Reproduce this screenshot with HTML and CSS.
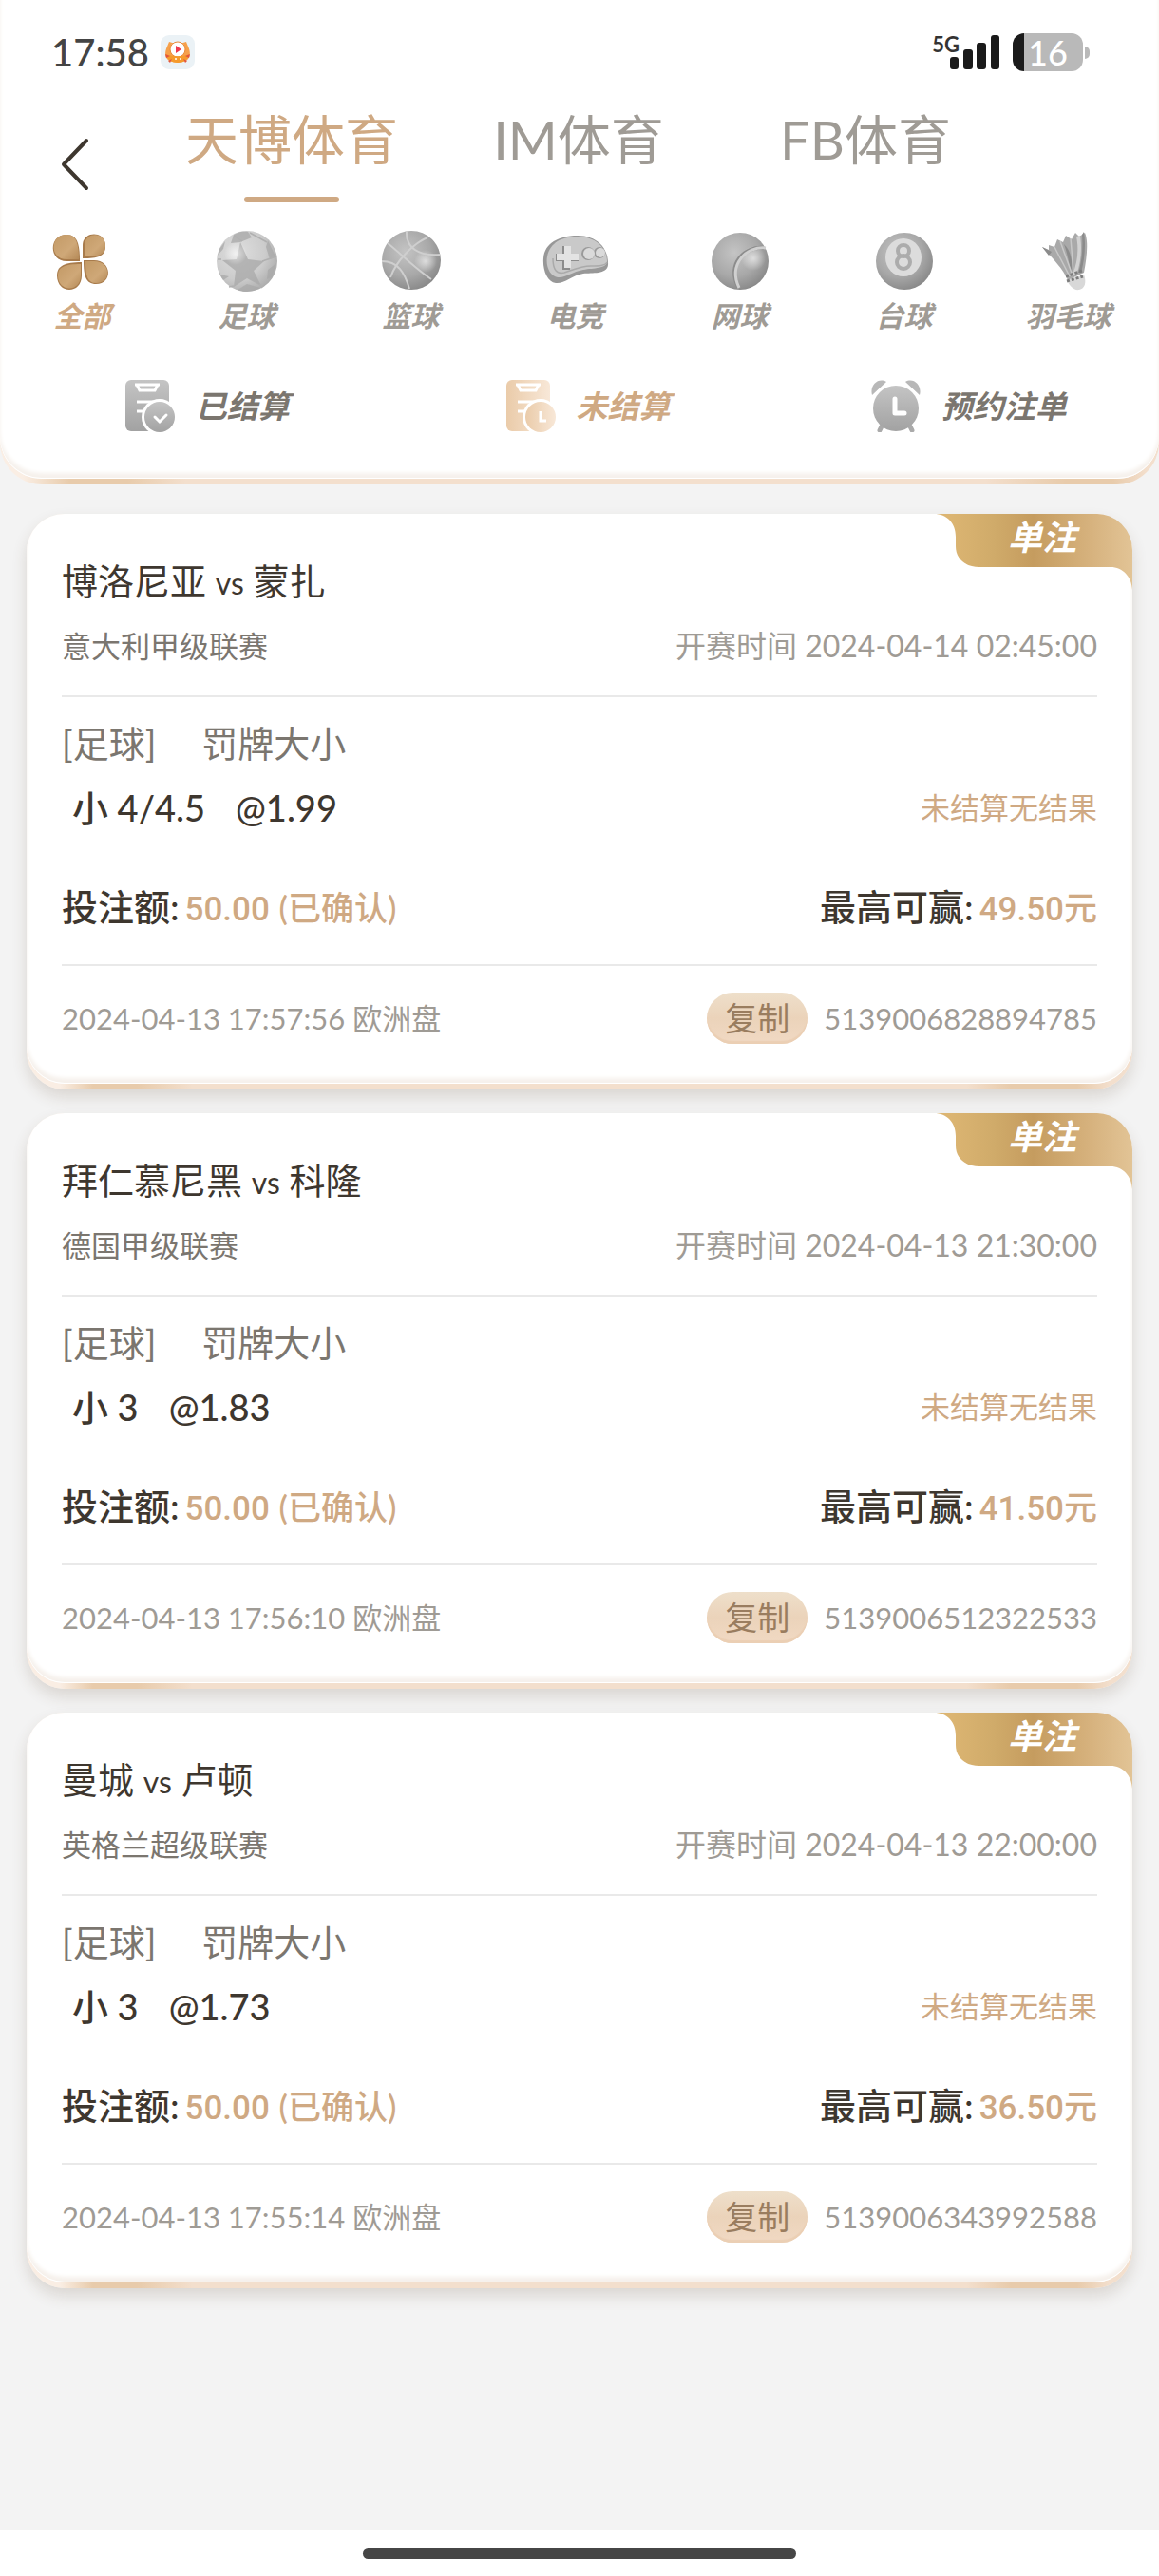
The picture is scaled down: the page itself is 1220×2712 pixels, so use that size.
FILE: index.html
```html
<!DOCTYPE html>
<html lang="zh-CN">
<head>
    <meta charset="UTF-8">
    <meta name="viewport" content="width=device-width, initial-scale=1.0">
    <title>投注记录</title>
    <link rel="stylesheet" href="styles.css">
</head>
<body>

<!-- Shared gradients and the badge shape -->
<svg class="defs" width="0" height="0" aria-hidden="true">
    <defs>
        <linearGradient id="gold" x1="0" y1="0" x2="1" y2="1">
            <stop offset="0" stop-color="#c39a66"/>
            <stop offset="0.6" stop-color="#cfa878"/>
            <stop offset="1" stop-color="#b58a58"/>
        </linearGradient>
        <radialGradient id="ball" cx="0.4" cy="0.35" r="0.7">
            <stop offset="0" stop-color="#c4c4c4"/>
            <stop offset="0.6" stop-color="#a8a8a8"/>
            <stop offset="1" stop-color="#868686"/>
        </radialGradient>
        <radialGradient id="soccer" cx="0.35" cy="0.35" r="0.75">
            <stop offset="0" stop-color="#dedede"/>
            <stop offset="0.6" stop-color="#cccccc"/>
            <stop offset="1" stop-color="#a8a8a8"/>
        </radialGradient>
        <radialGradient id="shine">
            <stop offset="0" stop-color="#fff" stop-opacity="0.6"/>
            <stop offset="1" stop-color="#fff" stop-opacity="0"/>
        </radialGradient>
        <linearGradient id="grey" x1="0" y1="0" x2="0" y2="1">
            <stop offset="0" stop-color="#c4c4c4"/>
            <stop offset="1" stop-color="#a2a2a2"/>
        </linearGradient>
        <linearGradient id="sand" x1="0" y1="0" x2="1" y2="0">
            <stop offset="0" stop-color="#eacba9"/>
            <stop offset="1" stop-color="#f8e8d8"/>
        </linearGradient>
        <linearGradient id="ribbon" x1="0" y1="0" x2="1" y2="0">
            <stop offset="0.08" stop-color="#dcb572"/>
            <stop offset="0.3" stop-color="#d0ab6a"/>
            <stop offset="0.5" stop-color="#c59c5f"/>
            <stop offset="0.8" stop-color="#d7b37f"/>
            <stop offset="1" stop-color="#e2c496"/>
        </linearGradient>
        <symbol id="badge-shape" viewBox="0 0 209 80">
            <path fill="url(#ribbon)" d="M0 0H170A38 38 0 0 1 209 38V80C208 66 199 56 186 56H48C34 56 23 48 23 34V24C23 10 14 0 0 0Z"/>
        </symbol>
    </defs>
</svg>

<div class="page">
    <header class="header">
        <div class="header-inner">
            <div class="status">
                <span class="time">17:58</span>
                <svg class="app-icon" viewBox="0 0 36 36" aria-hidden="true">
                    <rect width="36" height="36" rx="9" fill="#ebf2f6"/>
                    <path fill="#f6a04a" d="M9 7l5 1.500h8l5-1.500 2 5c2 4 3 10 0 13-4 5-18 5-22 0-3-3-2-9 0-13z"/>
                    <circle cx="18" cy="15" r="8" fill="#fff" stroke="#e88a3a"/>
                    <path fill="#ee3a4e" d="M16 11l6 4-6 4z"/>
                    <path fill="#f59a2c" d="M6 20c6 3 18 3 24 0-1 12-23 12-24 0z"/>
                    <path fill="#e2553c" d="M5 20l5 2-4 2zM31 20l-5 2 4 2zM8 27l4-2-2 4zM28 27l-4-2 2 4z"/>
                    <circle cx="16" cy="25" r="1" fill="#fff"/><circle cx="21" cy="25" r="1" fill="#fff"/>
                </svg>
                <div class="status-right">
                    <span class="network">5G</span>
                    <svg class="signal" viewBox="0 0 52 36" aria-hidden="true">
                        <g fill="#1a1a1a">
                            <rect x="0" y="23" width="9" height="13" rx="3"/>
                            <rect x="14" y="15" width="10" height="21" rx="3"/>
                            <rect x="28" y="8" width="10" height="28" rx="3"/>
                            <rect x="43" y="0" width="9" height="36" rx="3"/>
                        </g>
                    </svg>
                    <span class="battery">16</span>
                </div>
            </div>

            <div class="topbar">
                <button class="back" type="button" aria-label="返回">
                    <svg viewBox="0 0 30 56" width="30" height="56"><path d="M27 3L3 28l24 25" fill="none" stroke="#3e372f" stroke-width="4" stroke-linecap="round" stroke-linejoin="round"/></svg>
                </button>
                <nav class="tabs">
                    <a href="#" class="tab active">天博体育</a>
                    <a href="#" class="tab">IM体育</a>
                    <a href="#" class="tab">FB体育</a>
                </nav>
            </div>

            <nav class="sports">
                <a href="#" class="sport active">
                    <svg viewBox="0 0 72 72">
                        <g fill="#a87b4b">
                            <path d="M33 36H19C0 36 0 8 19 8c11 0 14 9 14 28z"/>
                            <path d="M36 33V19c0-15 24-16 24 1 0 11-8 13-24 13z"/>
                            <path d="M35 37v14c0 20-26 20-26 0 0-10 8-14 26-14z"/>
                            <path d="M37 35h11c19 0 20 25 2 25-11 0-13-9-13-25z"/>
                        </g>
                        <g fill="url(#gold)">
                            <path d="M32 34H19C1 34 1 8 19 8c10 0 13 9 13 26z"/>
                            <path d="M38 31V19c0-14 22-15 22 1 0 9-7 11-22 11z"/>
                            <path d="M34 39v12c0 18-24 18-24 0 0-9 7-12 24-12z"/>
                            <path d="M39 36h9c18 0 19 23 2 23-9 0-11-8-11-23z"/>
                        </g>
                    </svg>
                    全部
                </a>
                <a href="#" class="sport">
                    <svg viewBox="0 0 72 72">
                        <circle cx="36" cy="36" r="32" fill="url(#soccer)"/>
                        <g fill="#a9a9a9" opacity="0.75">
                            <path d="M29 16l8 18 17 2-11 10 8 16-15-8-14 9 2-17-14-11 15-1z"/>
                            <path d="M22 8c5-3 10-4 15-3l4 6-12 5-10 1zM58 14l8 17-6 3-4-13zM67 38l-5 15-5 2 1-10zM26 66l10-6 14 4c-6 4-16 5-24 2zM5 30l6-7 2-8-6 8zM5 42l3 8 9 2-6 4c-3-4-5-9-6-14z"/>
                        </g>
                        <path d="M31 15l-9-6M52 36l15-5M49 60l3 4M22 62l-5 1M9 34l-4 0M39 6l18 10" stroke="#b0b0b0" stroke-width="1.500" fill="none"/>
                        <circle cx="24" cy="28" r="12" fill="url(#shine)"/>
                    </svg>
                    足球
                </a>
                <a href="#" class="sport">
                    <svg viewBox="0 0 72 72">
                        <circle cx="36" cy="35" r="31" fill="url(#ball)"/>
                        <circle cx="51" cy="36" r="12" fill="url(#shine)"/>
                        <g fill="none" stroke="#cfcfcf" stroke-width="2">
                            <path d="M53 11C37 18 20 36 14 53"/>
                            <path d="M11 17c13 10 27 25 46 38"/>
                            <path d="M31 5c-1 16 12 26 35 24"/>
                            <path d="M5 36c17 0 24 12 29 29"/>
                        </g>
                    </svg>
                    篮球
                </a>
                <a href="#" class="sport">
                    <svg viewBox="0 0 72 72">
                        <path fill="#989898" d="M2 33C3 16 20 9 38 9c22 0 33 15 32 31-1 10-17 8-26 9-12 2-20 11-29 10C6 58 1 45 2 33z"/>
                        <path fill="#c9c9c9" d="M6 31C9 16 22 10 38 10c20 0 31 13 31 26 0 8-14 7-25 9-12 2-19 9-27 8C9 52 4 41 6 31z"/>
                        <path fill="none" stroke="#aaa" stroke-width="1.500" d="M12 33c0 12 4 17 12 15 9-3 18-7 28-7 8 0 15 0 17-4"/>
                        <path fill="#8c8c8c" d="M22 20h9v8h8v8h-9v9h-8v-9h-7v-8h7z"/>
                        <path fill="#e3e3e3" d="M24 20h7v8h8v7h-8v8h-7v-8h-8v-7h8z"/>
                        <circle cx="49" cy="28" r="7" fill="#999"/><circle cx="61" cy="27" r="6" fill="#999"/>
                        <circle cx="50" cy="28" r="6" fill="#dadada"/><circle cx="62" cy="27" r="5" fill="#dadada"/>
                    </svg>
                    电竞
                </a>
                <a href="#" class="sport">
                    <svg viewBox="0 0 72 72">
                        <circle cx="36" cy="36" r="30" fill="url(#ball)"/>
                        <circle cx="50" cy="33" r="13" fill="url(#shine)"/>
                        <path d="M61 22C41 20 22 38 34 63" fill="none" stroke="#8c8c8c" stroke-width="4"/>
                        <path d="M63 22C43 20 23 39 35 64" fill="none" stroke="#d0d0d0" stroke-width="3"/>
                    </svg>
                    网球
                </a>
                <a href="#" class="sport">
                    <svg viewBox="0 0 72 72">
                        <circle cx="36" cy="36" r="30" fill="url(#ball)"/>
                        <ellipse cx="35" cy="32" rx="19" ry="20" fill="#dcdcdc"/>
                        <g fill="none" stroke="#acacac" stroke-width="4">
                            <circle cx="35" cy="25" r="6"/>
                            <circle cx="35" cy="37" r="7"/>
                        </g>
                    </svg>
                    台球
                </a>
                <a href="#" class="sport">
                    <svg viewBox="0 0 72 72">
                        <path fill="#a9a9a9" d="M8 21l7 3 0-5 6 2 3-8 6 3 3-7 6 4 4-7 4 4 6-4c4 9 2 27-1 42L35 56C30 44 20 34 8 21z"/>
                        <path fill="#d2d2d2" d="M44 10c3 14 1 28-4 40l4 0c5-12 6-27 4-41z"/>
                        <path fill="#8b8b8b" d="M8 21l7 9 3-4zM31 18c8 8 9 18 8 32-3-13-4-21-8-32zM50 8c1 14 0 28-4 40l3 0c4-14 5-30 3-43z"/>
                        <path fill="none" stroke="#c8c8c8" stroke-width="1.500" d="M21 21l16 31M27 15l13 36M38 12l3 36"/>
                        <path fill="#d8d8d8" d="M34 56l18-6c3 8 1 15-5 16-6 1-10-4-13-10z"/>
                        <path fill="none" stroke="#7d7d7d" stroke-width="3" stroke-dasharray="3 2" d="M33 52l17-6M34 57l17-5"/>
                    </svg>
                    羽毛球
                </a>
            </nav>

            <nav class="filters">
                <a href="#" class="filter">
                    <svg viewBox="0 0 52 56">
                        <path fill="url(#grey)" d="M6 1h34a6 6 0 0 1 6 6v48H6a6 6 0 0 1-6-6V7a6 6 0 0 1 6-6z"/>
                        <path fill="none" stroke="#fff" stroke-width="3" d="M10 6h26M12 6l3 6h16l3-6M12 24h20M12 34h10"/>
                        <circle cx="36" cy="40" r="19" fill="#fff"/>
                        <circle cx="36" cy="40" r="16" fill="url(#grey)"/>
                        <path fill="none" stroke="#fff" stroke-width="3" stroke-linecap="round" d="M31 40l5 5 7-7"/>
                    </svg>
                    已结算
                </a>
                <a href="#" class="filter active">
                    <svg viewBox="0 0 52 56">
                        <path fill="url(#sand)" d="M6 1h34a6 6 0 0 1 6 6v48H6a6 6 0 0 1-6-6V7a6 6 0 0 1 6-6z"/>
                        <path fill="none" stroke="#fff" stroke-width="3" d="M10 6h26M12 6l3 6h16l3-6M12 24h20M12 34h10"/>
                        <circle cx="36" cy="40" r="19" fill="#fff"/>
                        <circle cx="36" cy="40" r="16" fill="url(#sand)"/>
                        <path fill="none" stroke="#fff" stroke-width="3" d="M36 34v10h6"/>
                    </svg>
                    未结算
                </a>
                <a href="#" class="filter">
                    <svg viewBox="0 0 52 56">
                        <path fill="#b8b8b8" d="M1 17C-2 6 8-2 16 3zM51 17C54 6 44-2 36 3z"/>
                        <circle cx="26" cy="31" r="27" fill="#fff"/>
                        <path stroke="#aaa" stroke-width="5" stroke-linecap="round" d="M11 50l-2 4M41 50l2 4"/>
                        <circle cx="26" cy="31" r="24" fill="url(#grey)"/>
                        <path fill="none" stroke="#fff" stroke-width="5" stroke-linecap="round" stroke-linejoin="round" d="M25 21v15h10"/>
                    </svg>
                    预约注单
                </a>
            </nav>
        </div>
    </header>

    <main class="bets">
        <article class="card">
            <div class="card-inner">
                <div class="badge"><svg aria-hidden="true"><use href="#badge-shape"/></svg><span>单注</span></div>
                <h2 class="match">博洛尼亚 <small>vs</small> 蒙扎</h2>
                <div class="row league"><span>意大利甲级联赛</span><time>开赛时间 2024-04-14 02:45:00</time></div>
                <div class="market"><span>[足球]</span><span>罚牌大小</span></div>
                <div class="row pick"><span class="odds"><span>小 4/4.5</span><span>@1.99</span></span><span class="result">未结算无结果</span></div>
                <div class="row stake">
                    <span>投注额:<b>50.00</b> <em>(已确认)</em></span>
                    <span>最高可赢:<b>49.50</b><em>元</em></span>
                </div>
                <div class="row foot">
                    <span>2024-04-13 17:57:56 欧洲盘</span>
                    <span class="order"><button class="copy" type="button">复制</button>5139006828894785</span>
                </div>
            </div>
        </article>

        <article class="card">
            <div class="card-inner">
                <div class="badge"><svg aria-hidden="true"><use href="#badge-shape"/></svg><span>单注</span></div>
                <h2 class="match">拜仁慕尼黑 <small>vs</small> 科隆</h2>
                <div class="row league"><span>德国甲级联赛</span><time>开赛时间 2024-04-13 21:30:00</time></div>
                <div class="market"><span>[足球]</span><span>罚牌大小</span></div>
                <div class="row pick"><span class="odds"><span>小 3</span><span>@1.83</span></span><span class="result">未结算无结果</span></div>
                <div class="row stake">
                    <span>投注额:<b>50.00</b> <em>(已确认)</em></span>
                    <span>最高可赢:<b>41.50</b><em>元</em></span>
                </div>
                <div class="row foot">
                    <span>2024-04-13 17:56:10 欧洲盘</span>
                    <span class="order"><button class="copy" type="button">复制</button>5139006512322533</span>
                </div>
            </div>
        </article>

        <article class="card">
            <div class="card-inner">
                <div class="badge"><svg aria-hidden="true"><use href="#badge-shape"/></svg><span>单注</span></div>
                <h2 class="match">曼城 <small>vs</small> 卢顿</h2>
                <div class="row league"><span>英格兰超级联赛</span><time>开赛时间 2024-04-13 22:00:00</time></div>
                <div class="market"><span>[足球]</span><span>罚牌大小</span></div>
                <div class="row pick"><span class="odds"><span>小 3</span><span>@1.73</span></span><span class="result">未结算无结果</span></div>
                <div class="row stake">
                    <span>投注额:<b>50.00</b> <em>(已确认)</em></span>
                    <span>最高可赢:<b>36.50</b><em>元</em></span>
                </div>
                <div class="row foot">
                    <span>2024-04-13 17:55:14 欧洲盘</span>
                    <span class="order"><button class="copy" type="button">复制</button>5139006343992588</span>
                </div>
            </div>
        </article>
    </main>

    <footer class="home-bar"><span></span></footer>
</div>

</body>
</html>
```
FILE: styles.css
```css
* {
    box-sizing: border-box;
}
body {
    margin: 0;
    background-color: #f3f3f3;
    color: #3e372f;
    font-family: Lato, "Noto Sans CJK SC", sans-serif;
}
a {
    color: inherit;
    text-decoration: none;
}
button {
    border: 0;
    background: none;
    font-family: inherit;
    cursor: pointer;
}
.defs {
    position: absolute;
}
.page {
    display: flex;
    flex-direction: column;
    min-height: 100vh;
}

/* Header */
.header {
    padding-bottom: 6px;
    border-radius: 0 0 44px 44px;
    background: linear-gradient(to right, #faeee4 2%, #e8cbab 6%, #e8cbab 11%, #f3dfcd 16%, #f3dfcd 85%, #e8cbab 92%, #e8cbab 96%, #f3dfcd 99%);
}
.header-inner {
    padding-bottom: 49px;
    border-radius: 0 0 44px 44px;
    background-color: #fff;
    box-shadow: inset 0 -1px 0 #fff, inset 0 -6px 4px #f6f1ec;
}
.status {
    display: flex;
    align-items: center;
    height: 96px;
    padding: 14px 80px 0 54px;
}
.time {
    margin-right: 12px;
    color: #444;
    font-size: 40px;
    font-weight: 500;
    line-height: 40px;
}
.app-icon {
    width: 36px;
    height: 36px;
}
.status-right {
    display: flex;
    align-items: center;
    margin-left: auto;
}
.network {
    align-self: flex-start;
    margin-right: -10px;
    color: #333;
    font-size: 22px;
    font-weight: 700;
    line-height: 24px;
}
.signal {
    width: 52px;
    height: 36px;
    margin-right: 14px;
}
.battery {
    position: relative;
    width: 74px;
    height: 40px;
    border-radius: 12px;
    background: linear-gradient(to right, #1a1a1a 12px, #b9b9b9 12px);
    color: #fff;
    font-size: 36px;
    font-weight: 500;
    line-height: 40px;
    text-align: center;
}
.battery::after {
    content: "";
    position: absolute;
    top: 14px;
    right: -7px;
    width: 5px;
    height: 13px;
    border-radius: 0 6px 6px 0;
    background-color: #b9b9b9;
}
.topbar {
    display: flex;
    padding-right: 158px;
}
.back {
    display: flex;
    align-items: flex-end;
    width: 156px;
    padding: 0 0 12px 64px;
}
.tabs {
    display: flex;
    flex: 1;
}
.tab {
    flex: 1;
    padding: 19px 0 34px;
    color: #9f9b95;
    font-size: 56px;
    line-height: 64px;
    text-align: center;
}
.tab.active {
    padding-bottom: 0;
    color: #cfa983;
}
.tab.active::after {
    content: "";
    display: block;
    width: 100px;
    height: 6px;
    margin: 28px auto 0;
    border-radius: 3px;
    background-color: #cfa983;
}
.sports {
    display: flex;
    padding: 26px 9px 0 0;
}
.sport {
    display: flex;
    flex: 1;
    flex-direction: column;
    align-items: center;
    color: #9f9b95;
    font-size: 30px;
    font-style: italic;
    font-weight: 700;
    line-height: 42px;
}
.sport svg {
    width: 72px;
    height: 72px;
}
.sport.active {
    color: #cfa983;
}
.filters {
    display: flex;
    padding: 46px 0 0 18px;
}
.filter {
    display: flex;
    flex: 1;
    align-items: center;
    justify-content: center;
    gap: 22px;
    color: #7b766f;
    font-size: 33px;
    font-style: italic;
    font-weight: 700;
    line-height: 56px;
}
.filter svg {
    width: 52px;
    height: 56px;
}
.filter.active {
    color: #cfa983;
}

/* Bet cards */
.bets {
    display: flex;
    flex: 1;
    flex-direction: column;
    gap: 25px;
    padding: 31px 28px;
}
.card {
    padding-bottom: 6px;
    border-radius: 40px;
    background: linear-gradient(to right, #faeee4 3%, #e8cbab 6%, #e8cbab 10%, #f3dfcd 15%, #f3dfcd 85%, #e8cbab 89%, #e8cbab 95%, #f3dfcd 98%);
    box-shadow: 0 8px 16px rgba(90, 65, 35, 0.16);
}
.card-inner {
    position: relative;
    padding: 46px 37px 42px;
    border-radius: 40px;
    background-color: #fff;
    box-shadow: inset 0 -1px 0 #fff, inset 0 -6px 4px #f6f1ec;
}
.badge {
    position: absolute;
    top: 0;
    right: 0;
    width: 209px;
    height: 80px;
}
.badge svg {
    display: block;
    width: 209px;
    height: 80px;
}
.badge span {
    position: absolute;
    top: 0;
    left: 78px;
    color: #fff;
    font-size: 36px;
    font-style: italic;
    font-weight: 700;
    line-height: 48px;
}
.row {
    display: flex;
    align-items: center;
    justify-content: space-between;
}
.match {
    margin: 0;
    font-size: 38px;
    font-weight: 400;
    line-height: 48px;
}
.match small {
    font-size: 32px;
    line-height: 1;
}
.league {
    padding: 25px 0 32px;
    border-bottom: 2px solid #e9e9e9;
    color: #7b766f;
    font-size: 31px;
    line-height: 40px;
}
.league time {
    color: #9f9b95;
    font-size: 32px;
}
.market {
    display: flex;
    gap: 48px;
    padding-top: 24px;
    color: #7b766f;
    font-size: 38px;
    line-height: 48px;
}
.pick {
    padding: 20px 0 56px;
    font-size: 38px;
    line-height: 48px;
}
.odds {
    display: flex;
    gap: 32px;
    padding-left: 11px;
    font-weight: 500;
}
.result {
    color: #cfa983;
    font-size: 31px;
}
.stake {
    padding-bottom: 37px;
    border-bottom: 2px solid #e9e9e9;
    font-size: 38px;
    font-weight: 500;
    line-height: 48px;
}
.stake b,
.stake em {
    color: #cfa983;
    font-size: 35px;
    font-style: normal;
    line-height: 1;
}
.stake b {
    margin-left: 6px;
    font-family: Roboto, sans-serif;
    font-weight: 500;
}
.foot {
    padding-top: 28px;
    color: #9f9b95;
    font-size: 31px;
    line-height: 40px;
}
.order {
    display: flex;
    align-items: center;
    gap: 17px;
}
.copy {
    height: 54px;
    padding: 0 19px;
    border-radius: 27px;
    background: linear-gradient(#eedfca, #ebd3ba 50%, #f1d9c3);
    box-shadow: inset 0 -3px 1px #ebcfb4;
    color: #9a7d5f;
    font-size: 34px;
    line-height: 54px;
}

/* System navigation strip */
.home-bar {
    display: flex;
    justify-content: center;
    height: 48px;
    padding-top: 19px;
    background-color: #fff;
}
.home-bar span {
    width: 456px;
    height: 11px;
    border-radius: 6px;
    background-color: #464646;
}
```
